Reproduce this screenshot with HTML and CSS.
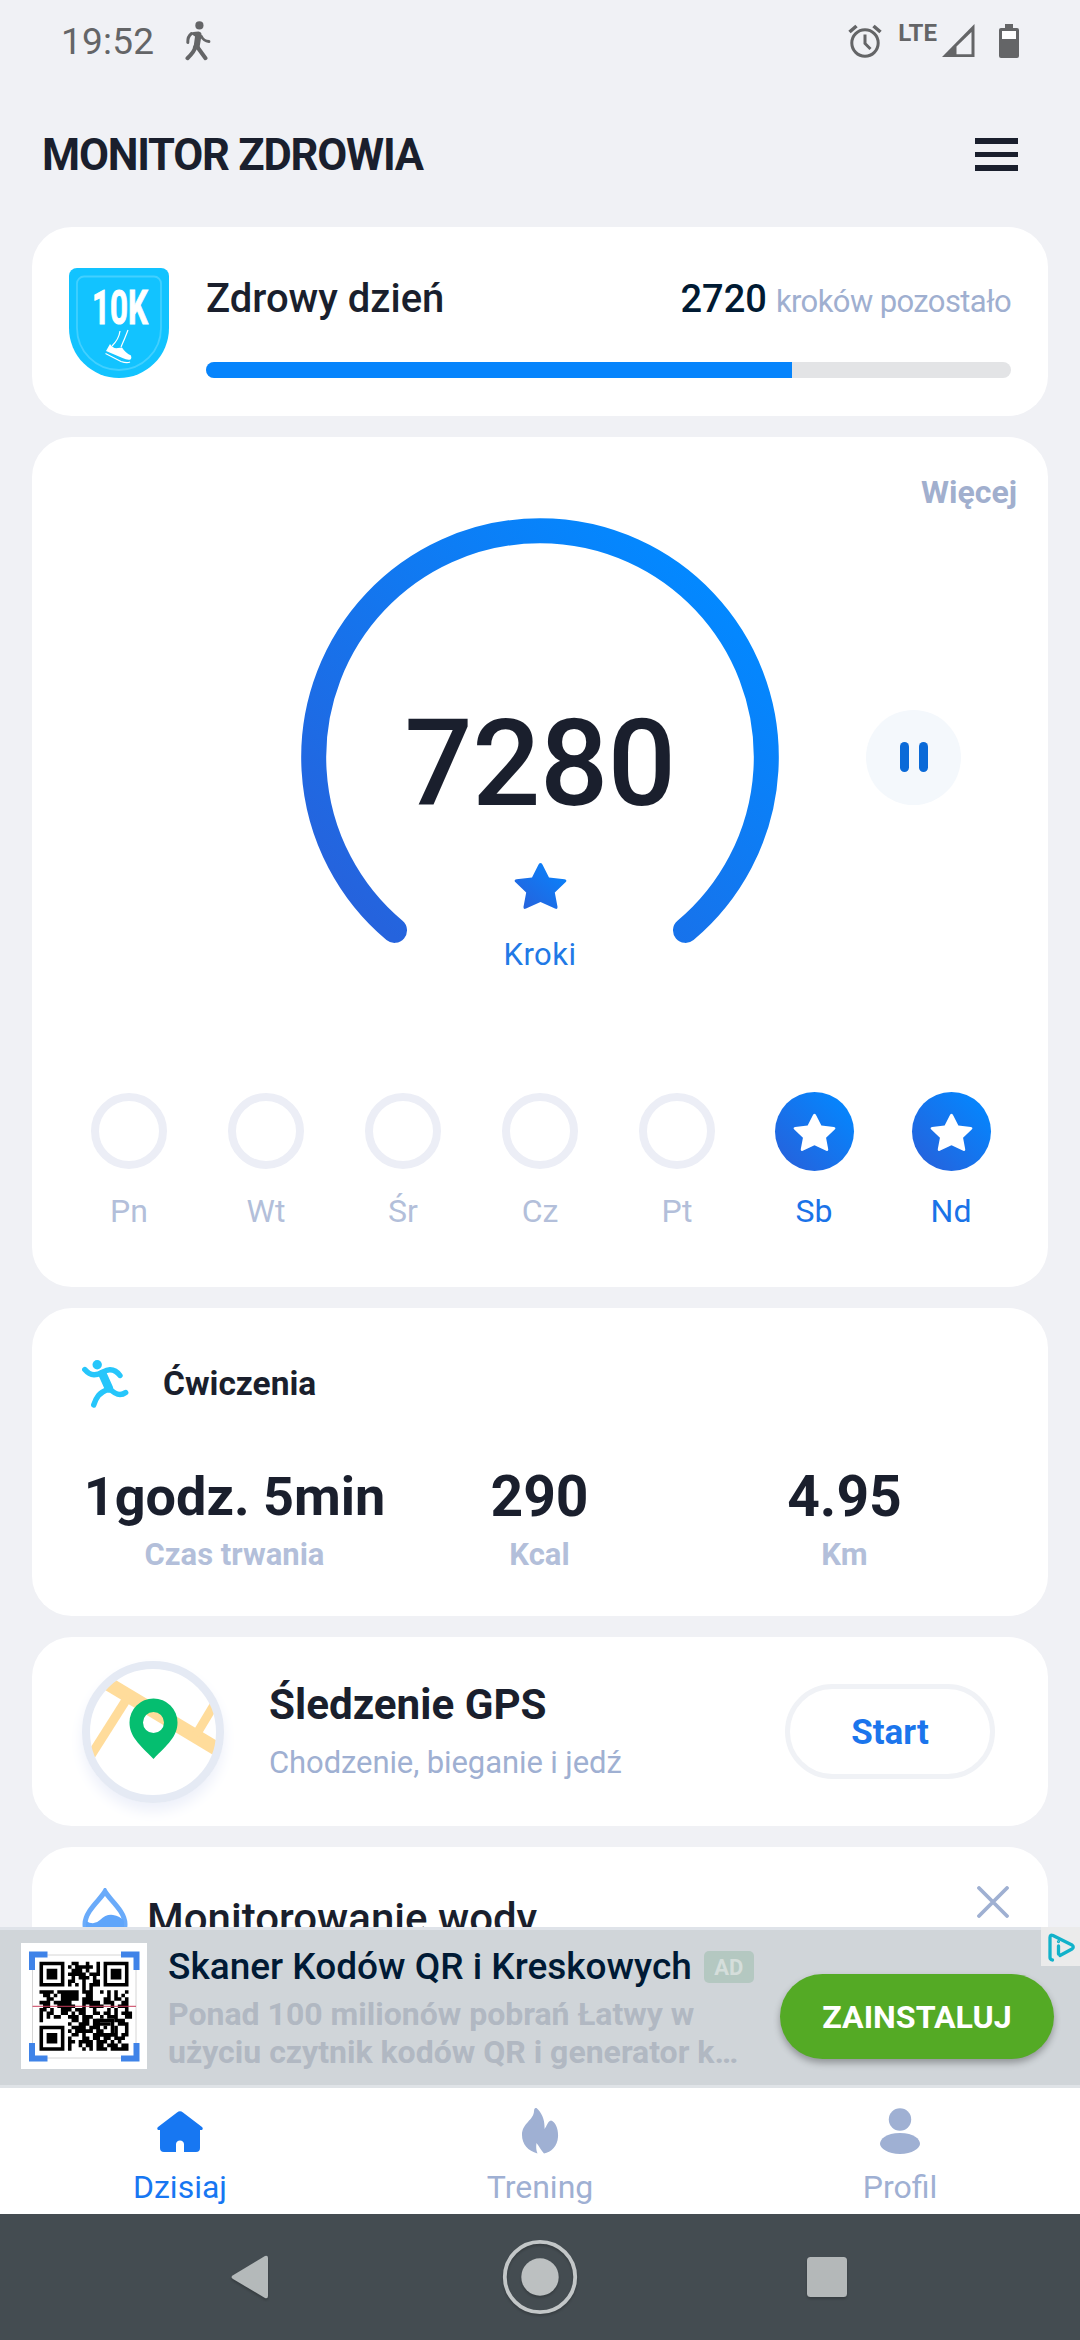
FILE: index.html
```html
<!DOCTYPE html>
<html lang="pl">
<head>
<meta charset="utf-8">
<title>Monitor zdrowia</title>
<link rel="stylesheet" href="styles.css">
</head>
<body>
<div class="screen">
  <div class="status">
    <span class="clock">19:52</span>
    <svg class="walk" width="26" height="40" viewBox="0 0 26 40" fill="none" stroke="#646567" stroke-linecap="round" stroke-linejoin="round">
      <circle cx="14.4" cy="4.4" r="4.1" fill="#646567" stroke="none"/>
      <path d="M5.5 12.5q2-2 8-2 3.500.5 3 4l-2 12q-3 2-6 0l1.500-11z" fill="#646567" stroke="none"/>
      <path d="M6.500 12.500q-4 3-3.700 9" stroke-width="3"/>
      <path d="M16.500 15.500q2 4.500 7.500 5" stroke-width="2.800"/>
      <path d="M10 26q0 4-7.500 11.200M12 25.500l8.500 11.700" stroke-width="4"/>
    </svg>
    <div class="status-icons">
      <svg width="34" height="36" viewBox="0 0 34 36" fill="none" stroke="#646567">
        <circle cx="17" cy="20" r="13.2" stroke-width="3"/>
        <path d="M17 11.500V20.500l5.500 5.500" stroke-width="3"/>
        <path d="M1.500 9L8.500 3M32.500 9L25.500 3" stroke-width="3.600"/>
      </svg>
      <span class="lte">LTE</span>
      <svg class="signal" width="33" height="34" viewBox="0 0 33 34">
        <path d="M0 33L32.500 0V33z" fill="#646567"/><path d="M14.500 22.500L29.500 8V30.200H14.500z" fill="#f0f1f5"/>
      </svg>
      <svg width="20" height="34" viewBox="0 0 20 34">
        <path d="M6 0h8v4h4a2 2 0 0 1 2 2v26a2 2 0 0 1-2 2H2a2 2 0 0 1-2-2V6a2 2 0 0 1 2-2h4z" fill="#646567"/><path d="M3 7h14v8H3z" fill="#fff"/>
      </svg>
    </div>
  </div>

  <header class="header">
    <h1 class="title">MONITOR ZDROWIA</h1>
    <div class="burger"><i></i><i></i><i></i></div>
  </header>

  <main class="feed">
    <section class="card goal">
      <svg width="100" height="110" viewBox="0 0 100 110">
        <path d="M8 0H92a8 8 0 0 1 8 8V60a50 50 0 0 1-100 0V8a8 8 0 0 1 8-8z" fill="#12c3ff"/>
        <path d="M15 8.500H85a7 7 0 0 1 7 7V60a42 42 0 0 1-84 0V15.500a7 7 0 0 1 7-7z" fill="none" stroke="#42d0ff" stroke-width="1.800"/>
        <text transform="translate(23 56) scale(.64 1)" font-size="49" font-weight="700" fill="#fff" stroke="#fff" stroke-width="1">10K</text>
        <path d="M51 63q-1 8-8 15M59 62q-3 8-7 17" fill="none" stroke="#fff" stroke-width="1.200"/>
        <path d="M41 76q3 5 8 4l4-.500q3 5 9 8 1 3-.500 4-3 1-8-1.500L37 83z" fill="#fff"/>
        <path d="M37 84.500L53 92.500q5 2 8.500.500" fill="none" stroke="#12c3ff" stroke-width="1"/>
        <path d="M36.500 85.500L52 93.500q6 2 9 .500" fill="none" stroke="#fff" stroke-width="1.200"/>
      </svg>
      <div class="goal-body">
        <div class="goal-text">
          <span class="goal-name">Zdrowy dzień</span>
          <span class="goal-left"><b>2720</b><span>kroków pozostało</span></span>
        </div>
        <div class="bar"><div class="bar-fill" style="width:72.8%"></div></div>
      </div>
    </section>

    <section class="card steps">
      <div class="more">Więcej</div>
      <div class="dial-row">
        <div class="dial">
          <svg class="arc" width="478" height="478" viewBox="0 0 478 478">
            <defs>
              <linearGradient id="arc" gradientUnits="userSpaceOnUse" x1="85" y1="413" x2="403" y2="70"><stop offset="0" stop-color="#2563dd"/><stop offset="1" stop-color="#0388ff"/></linearGradient>
              <linearGradient id="blue" x1="0" y1="1" x2="1" y2="0"><stop offset="0.100" stop-color="#2563dd"/><stop offset="0.900" stop-color="#0982fb"/></linearGradient>
              <path id="star" d="M26.500 1q1.500 0 2.200 2l6.300 12.500 15.500 1.800q3.200.800 1 3L40.800 30.500l2.700 14.300q.200 3-2.500 1.800L26.500 40 12 46.600q-2.700 1.200-2.500-1.800l2.700-14.300L1.500 20.300q-2.200-2.200 1-3L18 15.500 24.300 3q.700-2 2.200-2z"/>
            </defs>
            <path d="M93.500 412.400A226.300 226.300 0 1 1 384.500 412.400" fill="none" stroke="url(#arc)" stroke-width="25" stroke-linecap="round"/>
          </svg>
          <div class="dial-text">
            <div class="count">7280</div>
            <svg class="dial-star" width="53" height="47" viewBox="0 0 53 47"><use href="#star" fill="url(#blue)"/></svg>
            <div class="unit">Kroki</div>
          </div>
        </div>
        <div class="pause"><i></i><i></i></div>
      </div>
      <div class="days">
        <div class="day"><span class="ring"></span>Pn</div>
        <div class="day"><span class="ring"></span>Wt</div>
        <div class="day"><span class="ring"></span>Śr</div>
        <div class="day"><span class="ring"></span>Cz</div>
        <div class="day"><span class="ring"></span>Pt</div>
        <div class="day done"><span class="disc"><svg width="43" height="38" viewBox="0 0 53 47"><use href="#star" fill="#fff"/></svg></span>Sb</div>
        <div class="day done"><span class="disc"><svg width="43" height="38" viewBox="0 0 53 47"><use href="#star" fill="#fff"/></svg></span>Nd</div>
      </div>
    </section>

    <section class="card workout">
      <div class="workout-head">
        <svg width="47" height="48" viewBox="0 0 47 48" fill="none" stroke="#26c6fb" stroke-width="5.400" stroke-linecap="round" stroke-linejoin="round">
          <circle cx="15.200" cy="4.800" r="4.700" fill="#26c6fb" stroke="none"/>
          <path d="M2.800 9.500Q7 14.500 12 14.800C19 15 22 9.600 28 9.800Q34 10 38 15.500"/>
          <path d="M20.500 14L27 28.500" stroke-width="8.500"/>
          <path d="M27.500 28.500Q33 34.500 38 34.500 41 34.500 43.700 32.500M25.500 29.500C17 33 14.500 37 11.700 45"/>
        </svg>
        <span>Ćwiczenia</span>
      </div>
      <div class="stats">
        <div class="stat"><b class="time">1godz. 5min</b><span>Czas trwania</span></div>
        <div class="stat"><b>290</b><span>Kcal</span></div>
        <div class="stat"><b>4.95</b><span>Km</span></div>
      </div>
    </section>

    <section class="card gps">
      <div class="map">
        <svg width="142" height="142" viewBox="0 0 142 142">
          <defs><clipPath id="round"><circle cx="71" cy="71" r="64"/></clipPath></defs>
          <g clip-path="url(#round)" fill="none" stroke="#ffdc9b">
            <path d="M15 16L145 94" stroke-width="14"/><path d="M46 36L6 99" stroke-width="9"/><path d="M114 74L138 34" stroke-width="9"/>
          </g>
          <path d="M71.500 37.500a24 24 0 0 1 24 24c0 14-10 22-24 36.500-14-14.500-24-22.500-24-36.500a24 24 0 0 1 24-24zm0 13.500a10.500 10.500 0 1 0 0 21 10.500 10.500 0 0 0 0-21z" fill="#05be70"/>
          <circle cx="71" cy="71" r="67" fill="none" stroke="#e5eaf4" stroke-width="8"/>
        </svg>
      </div>
      <div class="gps-text"><div class="gps-name">Śledzenie GPS</div><div class="gps-sub">Chodzenie, bieganie i jedź</div></div>
      <div class="start">Start</div>
    </section>

    <section class="card water">
      <svg class="drop" width="46" height="58" viewBox="0 0 46 58">
        <path d="M23 3.500C19 11 3 23 3 36a20 20 0 0 0 40 0C43 23 27 11 23 3.500z" fill="none" stroke="#6aabfa" stroke-width="5"/>
        <path d="M4 33q8 5 14-1t13-5 11 6v7a19 19 0 0 1-38 0z" fill="#5fa5fa"/>
      </svg>
      <span class="water-name">Monitorowanie wody</span>
      <svg class="close" width="32" height="32" viewBox="0 0 32 32" stroke="#9fb0d2" stroke-width="3.800" stroke-linecap="round"><path d="M2 2L30 30M30 2L2 30"/></svg>
    </section>
  </main>

  <aside class="ad">
    <svg class="qr" width="126" height="126" viewBox="0 0 126 126">
      <rect width="126" height="126" fill="#fff"/>
      <path d="M11.500 12H115V115H11.500z" fill="none" stroke="#ccc" stroke-width=".800"/>
      <path d="M11 27V11.500H26.500M100 11.500H115.500V27M115.500 100V115.500H100M26.500 115.500H11V100" fill="none" stroke="#3f83e8" stroke-width="6"/>
      <g transform="translate(18.500 18.700) scale(3.560)">
        <path d="M.5.5h6v6h-6zM18.500.5h6v6h-6zM.5 18.500h6v6h-6zM16.500 16.500h4v4h-4z" fill="none" stroke="#000"/>
        <path d="M2 2h3v3H2zM20 2h3v3h-3zM2 20h3v3H2zM18 18h1v1h-1z"/>
        <path d="M9 .5h2m2 0h1m2 0h1M8 1.500h1m1 0h5m1 0h1M9 2.500h3m1 0h1m2 0h1M8 3.500h5m1 0h3M9 4.500h1m1 0h3m1 0h1M8 5.500h2m2 0h1m2 0h2M8 6.500h1m1 0h1m1 0h1m1 0h3M12 7.500h1m1 0h1M0 8.500h4m1 0h6m1 0h3m2 0h1m1 0h1m1 0h1m2 0h1M1 9.500h2m1 0h1m1 0h5m2 0h2m4 0h1m1 0h1m1 0h1M2 10.500h2m2 0h5m1 0h3m3 0h2m1 0h2m1 0h1M0 11.500h3m1 0h5m3 0h5m1 0h3m2 0h2M1 12.500h2m2 0h5m2 0h1m1 0h4m2 0h1m1 0h3M0 13.500h2m1 0h1m2 0h3m1 0h3m2 0h1m3 0h1m1 0h1m2 0h1M0 14.500h1m1 0h2m2 0h2m1 0h1m1 0h2m2 0h2m1 0h2m1 0h1m1 0h3M0 15.500h1m1 0h1m1 0h2m2 0h3m1 0h3m2 0h1m1 0h3m2 0h2M0 16.500h1m8 0h2m1 0h2m1 0h2M8 17.500h1m2 0h3m1 0h2M9 18.500h4m1 0h3m7 0h1M8 19.500h1m1 0h5m1 0h1m4 0h1m2 0h1M9 20.500h2m1 0h1m2 0h7m1 0h2M8 21.500h1m3 0h2m1 0h2m1 0h2m1 0h3M8 22.500h2m1 0h4m1 0h3m1 0h1m1 0h1M8 23.500h1m2 0h1m1 0h2m1 0h2m1 0h3m1 0h2M8 24.500h1m3 0h1m1 0h1m1 0h3m1 0h5M17 17.500h3M17 19.500h1M21 16.500h3M22 17.500h3M21 18.500h1" stroke="#000"/>
      </g>
      <path d="M11.500 63.300H115" stroke="#c83c5a" stroke-width="1"/>
    </svg>
    <div class="ad-text">
      <div class="ad-title">Skaner Kodów QR i Kreskowych<span class="ad-tag">AD</span></div>
      <div class="ad-copy">Ponad 100 milionów pobrań Łatwy w<br>użyciu czytnik kodów QR i generator k…</div>
    </div>
    <div class="install">ZAINSTALUJ</div>
    <div class="choices"><svg width="27" height="29" viewBox="0 0 27 29" fill="none" stroke="#13b2ca" stroke-width="3.300" stroke-linejoin="round" stroke-linecap="round"><path d="M4.500 27C2 27 2 25 2 24V4.500Q2 1 5 2.500L24 12q2.500 2 0 4L12 22.500M10.500 13V21"/><circle cx="10.500" cy="8.600" r=".600" stroke-width="2"/></svg></div>
  </aside>

  <nav class="tabs">
    <div class="tab current">
      <svg width="46" height="46" viewBox="0 0 46 46"><path d="M20 4.500q3-2.500 6 0L45 19q1.500 1.500 0 3h-2V40a4 4 0 0 1-4 4H27V36q-.500-3.500-4-3.500t-4 3.500v8H7a4 4 0 0 1-4-4V22H1q-1.500-1.500 0-3z" fill="#1777f2"/></svg>
      Dzisiaj
    </div>
    <div class="tab">
      <svg width="37" height="46" viewBox="0 0 37 46"><path d="M14.500 0C20 5 23 12 22.500 21 25 18 26 13 29 12.500 34 14 36.500 22 36 29 35.500 38 29 44.500 22 45.500 19 42 17.500 39 14.500 35 14 39 14 42 15.500 45.500 6 43 0 36 0 27 0 15 12 12 12 3Q12-.500 14.500 0z" fill="#9fb0d3"/></svg>
      Trening
    </div>
    <div class="tab">
      <svg width="40" height="46" viewBox="0 0 40 46" fill="#9fb0d3"><circle cx="20" cy="11.500" r="11.200"/><path d="M20 25c14 0 20 6 20 11 0 4-8 10-20 10S0 40 0 36c0-5 6-11 20-11z"/></svg>
      Profil
    </div>
  </nav>

  <div class="sysnav">
    <svg width="38" height="44" viewBox="0 0 38 44"><path d="M2 20.200L34 1q3-1 3 2V41q0 3-3 2L2 24q-3-1.900 0-3.800z" fill="#b4b9ba"/></svg>
    <svg width="76" height="76" viewBox="0 0 76 76"><circle cx="38" cy="38" r="35.200" fill="none" stroke="#c3c7c8" stroke-width="3.800"/><circle cx="38" cy="38" r="18.700" fill="#bcc0c1"/></svg>
    <svg width="40" height="40" viewBox="0 0 40 40"><rect width="40" height="40" rx="3.500" fill="#b4b8b9"/></svg>
  </div>
</div>
</body>
</html>
```
FILE: styles.css
```css
* { box-sizing: border-box; }

body {
  margin: 0;
  font-family: Roboto, "Liberation Sans", sans-serif;
  color: #1a1f2d;
}

svg { display: block; flex: none; }

.screen {
  width: 1080px;
  height: 2340px;
  display: flex;
  flex-direction: column;
  background: #f0f1f5;
  overflow: hidden;
}

/* Status bar */
.status {
  height: 82px;
  flex: none;
  display: flex;
  align-items: center;
  padding: 0 61px 0 61px;
  color: #646567;
}
.clock { font-size: 37px; letter-spacing: 0.2px; }
.walk { margin-left: 31px; }
.status-icons { margin-left: auto; display: flex; align-items: center; }
.lte { font-size: 24px; font-weight: 700; line-height: 24px; margin: 0 5px 16px 16px; }
.signal { margin-right: 24px; }

/* Header */
.header {
  height: 145px;
  flex: none;
  display: flex;
  align-items: center;
  justify-content: space-between;
  padding: 0 62px 0 42px;
}
.title { margin: 0; padding-top: 2px; font-size: 43.5px; font-weight: 700; letter-spacing: -1.2px; }
.burger { width: 43px; display: grid; gap: 8px; }
.burger i { height: 5.5px; background: #1a1f2d; }

/* Cards */
.feed {
  height: 1700px;
  flex: none;
  padding: 0 32px;
  display: flex;
  flex-direction: column;
  gap: 21px;
  overflow: hidden;
}
.card { background: #fff; border-radius: 40px; flex: none; }

.goal { height: 189px; display: flex; padding: 41px 37px 0; }
.goal-body { flex: 1; margin-left: 37px; }
.goal-text { display: flex; align-items: baseline; justify-content: space-between; line-height: 60px; height: 60px; padding-top: 1px; }
.goal-name { font-size: 40px; font-weight: 500; }
.goal-left { display: flex; align-items: baseline; gap: 9px; font-size: 31px; color: #9fafd0; }
.goal-left b { font-size: 38px; font-weight: 500; color: #001a33; }
.goal-left span { letter-spacing: -0.6px; }
.bar { margin-top: 34px; height: 16px; border-radius: 8px; background: #e3e4e6; overflow: hidden; }
.bar-fill { height: 100%; background: #0684fc; }

.steps { height: 850px; padding-top: 35px; }
.more { padding-right: 31px; text-align: right; font-size: 32px; line-height: 40px; font-weight: 700; color: #a1afce; }
.dial-row { margin-top: 6px; display: grid; grid-template-columns: 1fr 478px 1fr; align-items: center; }
.dial { grid-column: 2; display: grid; height: 478px; }
.dial > * { grid-area: 1 / 1; }
.dial-text { padding-top: 186px; display: flex; flex-direction: column; align-items: center; }
.count { font-size: 120px; line-height: 120px; font-weight: 500; letter-spacing: -0.5px; }
.dial-star { margin-top: 38px; }
.unit { margin-top: 28px; font-size: 31px; line-height: 36px; color: #2179e6; letter-spacing: 0.5px; }
.pause {
  width: 95px;
  height: 95px;
  margin-left: 87px;
  border-radius: 50%;
  background: #f4f8fc;
  display: flex;
  align-items: center;
  justify-content: center;
  gap: 10px;
}
.pause i { width: 9px; height: 30px; border-radius: 5px; background: #0a6ad8; }

.days { margin-top: 96px; padding: 0 28.5px; display: grid; grid-template-columns: repeat(7, 1fr); }
.day { display: flex; flex-direction: column; align-items: center; font-size: 32px; line-height: 40px; color: #b3bfda; }
.ring { width: 76px; height: 76px; border: 8px solid #eceef6; border-radius: 50%; margin: 1px 0 22px; }
.disc {
  width: 79px;
  height: 79px;
  margin-bottom: 20px;
  border-radius: 50%;
  background: linear-gradient(45deg, #2563dd 10%, #0684fc 85%);
  display: flex;
  align-items: center;
  justify-content: center;
}
.done { color: #1a73e8; }

.workout { height: 308px; padding: 48px 50px 0; }
.workout-head { height: 55px; display: flex; align-items: center; gap: 34px; font-size: 33.5px; font-weight: 700; }
.stats { margin-top: 56px; display: grid; grid-template-columns: repeat(3, 305px); text-align: center; }
.stat { display: flex; flex-direction: column; gap: 10px; align-items: center; }
.stat b { font-size: 57px; line-height: 60px; font-weight: 700; white-space: nowrap; }
.stat .time { font-size: 54px; }
.stat span { font-size: 31px; line-height: 36px; font-weight: 700; color: #b3bfda; }

.gps { height: 189px; display: flex; align-items: center; padding: 0 53px 0 50px; }
.map { border-radius: 50%; box-shadow: 0 8px 14px #edf0fa; background: #fff; }
.gps-text { margin-left: 45px; }
.gps-name { font-size: 42.2px; line-height: 50px; font-weight: 700; }
.gps-sub { margin-top: 13px; font-size: 31px; line-height: 40px; letter-spacing: -0.1px; color: #9fb0d2; }
.start {
  width: 210px;
  height: 95px;
  margin-left: auto;
  padding-top: 2px;
  border: 5px solid #f0f2f6;
  border-radius: 48px;
  display: flex;
  align-items: center;
  justify-content: center;
  font-size: 35px;
  font-weight: 700;
  color: #1b75ec;
}

.water { height: 189px; display: flex; align-items: flex-start; padding: 39px 39px 0 50px; }
.drop { margin-top: 2px; }
.water-name { margin: 8px 0 0 19px; font-size: 42px; line-height: 50px; font-weight: 500; }
.close { margin-left: auto; }

/* Ad banner */
.ad {
  height: 161px;
  flex: none;
  position: relative;
  display: flex;
  padding-left: 21px;
  background: #d0d5d9;
  border-top: 3px solid #dfe3e9;
  border-bottom: 3px solid #dfe3e7;
}
.qr { margin-top: 13px; }
.ad-text { margin: 13px 0 0 21px; }
.ad-title { display: flex; align-items: center; font-size: 37px; line-height: 48px; font-weight: 500; color: #001a35; white-space: nowrap; }
.ad-tag { margin-left: 12px; width: 50px; height: 32px; border-radius: 5px; background: #b4c8c1; color: #d5dedb; font-size: 22px; font-weight: 700; line-height: 34px; text-align: center; }
.ad-copy { margin-top: 4px; font-size: 32px; line-height: 38px; font-weight: 700; color: #b1b8c2; white-space: nowrap; }
.install {
  position: absolute;
  left: 780px;
  top: 44px;
  width: 274px;
  height: 85px;
  border-radius: 43px;
  background: #54aa25;
  box-shadow: 0 4px 7px rgba(0, 0, 0, 0.3);
  color: #fff;
  font-size: 32.2px;
  font-weight: 700;
  line-height: 87px;
  text-align: center;
}
.choices { position: absolute; right: 0; top: -3px; width: 39px; height: 39px; background: #ebebeb; padding: 6px 0 0 7px; }

/* Bottom tabs */
.tabs { height: 126px; flex: none; display: grid; grid-template-columns: repeat(3, 1fr); background: #fff; }
.tab { display: flex; flex-direction: column; align-items: center; gap: 15px; padding-top: 20px; font-size: 32px; line-height: 36px; color: #9fb0d3; }
.current { color: #1777f2; }

/* System navigation */
.sysnav { height: 126px; flex: none; display: grid; grid-template-columns: 271px 229px 307px; column-gap: 0; align-items: center; padding-left: 231px; background: #444c51; }
.sysnav svg { filter: drop-shadow(0 2px 1px rgba(0, 0, 0, 0.2)); }
.sysnav { grid-template-columns: 271px 305px 40px; }
```
